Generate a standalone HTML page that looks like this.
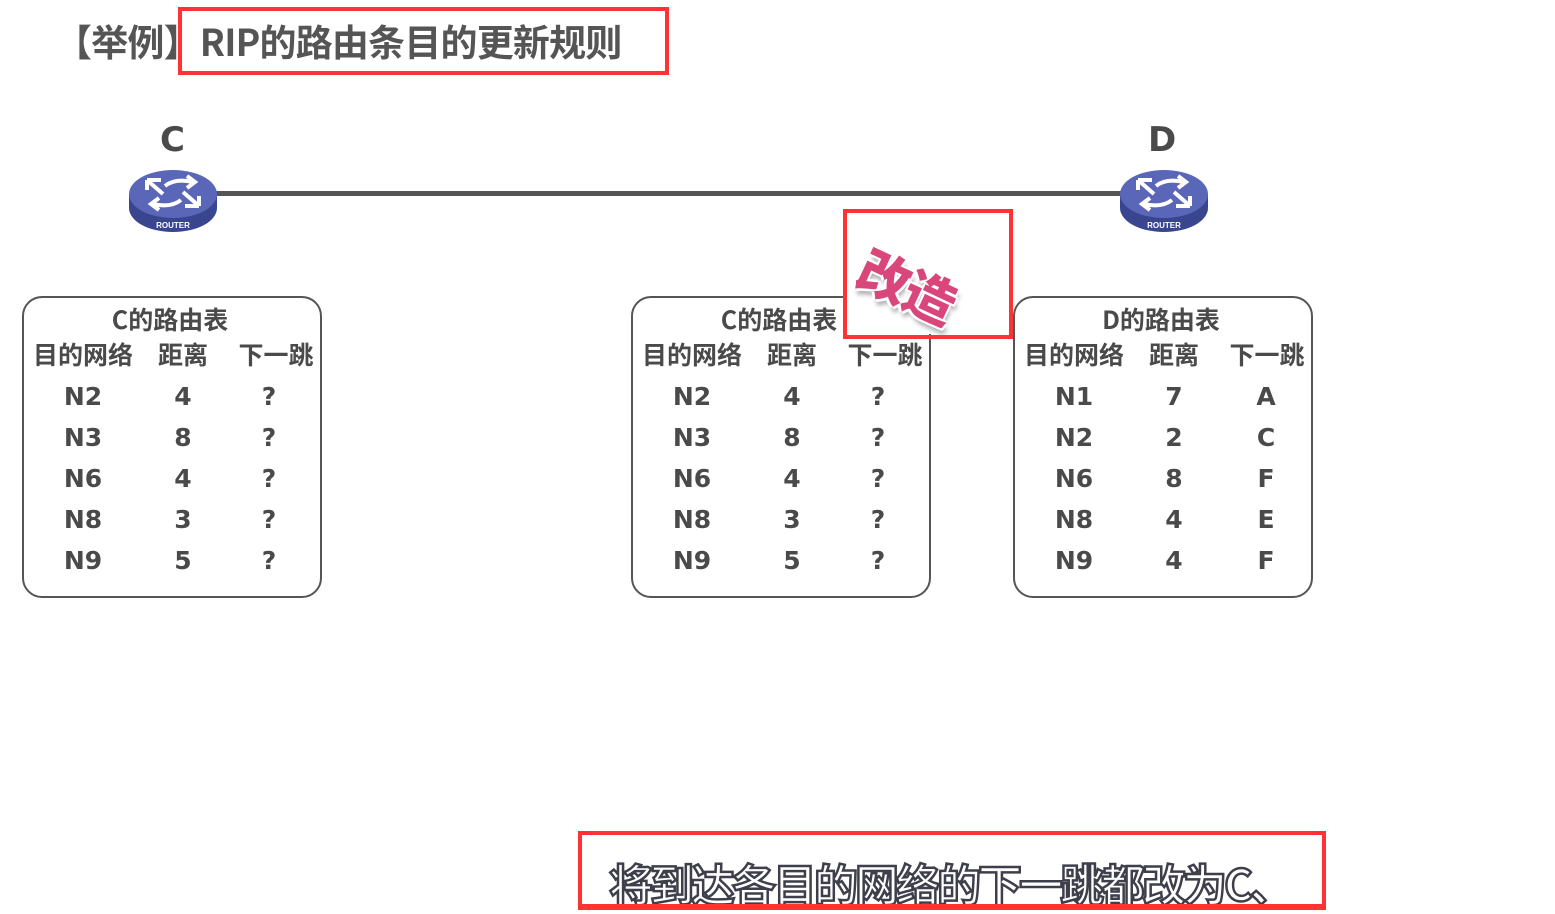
<!DOCTYPE html>
<html><head><meta charset="utf-8"><style>
body{margin:0;width:1555px;height:910px;background:#fff;position:relative;overflow:hidden;font-family:"Liberation Sans","Noto Sans CJK SC",sans-serif;color:#4a4a4a;font-weight:bold}
.a{position:absolute;white-space:nowrap}
.red{position:absolute;border:4px solid #f33;box-sizing:border-box}
.tb{position:absolute;top:296px;width:300px;height:302px;border:2px solid #555;border-radius:20px;box-sizing:border-box}
.tb div{position:absolute;transform:translateX(-50%);white-space:nowrap;font-family:"Noto Sans CJK SC",sans-serif}
.t{font-size:25px;top:3px}
.h{font-size:25px;top:38px}
.c{font-size:25px;font-family:"DejaVu Sans","Noto Sans CJK SC",sans-serif!important}
.lbl{font-size:34px;font-family:"DejaVu Sans",sans-serif}
</style></head><body>
<div class="a" style="left:55px;top:13px;font-size:37px;font-family:'Noto Sans CJK SC',sans-serif;color:#555;line-height:54px;letter-spacing:-0.8px">【举例】RIP的路由条目的更新规则</div>
<div class="red" style="left:178px;top:7px;width:491px;height:68px"></div>

<div class="a lbl" style="left:160px;top:120px">C</div>
<div class="a lbl" style="left:1148px;top:120px">D</div>
<div class="a" style="left:210px;top:191px;width:915px;height:5px;background:#555"></div>

<svg class="a" style="left:127px;top:166px" width="92" height="68" viewBox="0 0 92 68">
<ellipse cx="46" cy="42" rx="44" ry="24" fill="#3a4590"/>
<rect x="2" y="28" width="88" height="14" fill="#3a4590"/>
<ellipse cx="46" cy="28" rx="44" ry="24" fill="#5a67b8"/>
<g stroke="#fff" stroke-width="4" fill="none">
<path d="M20 14 L34 14 M20 14 L20 24 M20 14 L36 28"/>
<path d="M72 40 L58 40 M72 40 L72 30 M72 40 L56 26"/>
<path d="M38 20 Q48 12 66 16 M60 10 L68 16 L60 22"/>
<path d="M54 34 Q44 42 26 38 M32 32 L24 38 L32 44"/>
</g>
<text x="46" y="62" font-size="8" fill="#fff" text-anchor="middle" font-family="Liberation Sans" font-weight="bold">ROUTER</text>
</svg>
<svg class="a" style="left:1118px;top:166px" width="92" height="68" viewBox="0 0 92 68">
<ellipse cx="46" cy="42" rx="44" ry="24" fill="#3a4590"/>
<rect x="2" y="28" width="88" height="14" fill="#3a4590"/>
<ellipse cx="46" cy="28" rx="44" ry="24" fill="#5a67b8"/>
<g stroke="#fff" stroke-width="4" fill="none">
<path d="M20 14 L34 14 M20 14 L20 24 M20 14 L36 28"/>
<path d="M72 40 L58 40 M72 40 L72 30 M72 40 L56 26"/>
<path d="M38 20 Q48 12 66 16 M60 10 L68 16 L60 22"/>
<path d="M54 34 Q44 42 26 38 M32 32 L24 38 L32 44"/>
</g>
<text x="46" y="62" font-size="8" fill="#fff" text-anchor="middle" font-family="Liberation Sans" font-weight="bold">ROUTER</text>
</svg>

<div class="tb" style="left:22px">
<div class="t" style="left:146px">C的路由表</div>
<div class="h" style="left:59px">目的网络</div><div class="h" style="left:159px">距离</div><div class="h" style="left:252px">下一跳</div>
<div class="c" style="left:59px;top:84px">N2</div><div class="c" style="left:159px;top:84px">4</div><div class="c" style="left:245px;top:84px">?</div>
<div class="c" style="left:59px;top:125px">N3</div><div class="c" style="left:159px;top:125px">8</div><div class="c" style="left:245px;top:125px">?</div>
<div class="c" style="left:59px;top:166px">N6</div><div class="c" style="left:159px;top:166px">4</div><div class="c" style="left:245px;top:166px">?</div>
<div class="c" style="left:59px;top:207px">N8</div><div class="c" style="left:159px;top:207px">3</div><div class="c" style="left:245px;top:207px">?</div>
<div class="c" style="left:59px;top:248px">N9</div><div class="c" style="left:159px;top:248px">5</div><div class="c" style="left:245px;top:248px">?</div>
</div>

<div class="tb" style="left:631px">
<div class="t" style="left:146px">C的路由表</div>
<div class="h" style="left:59px">目的网络</div><div class="h" style="left:159px">距离</div><div class="h" style="left:252px">下一跳</div>
<div class="c" style="left:59px;top:84px">N2</div><div class="c" style="left:159px;top:84px">4</div><div class="c" style="left:245px;top:84px">?</div>
<div class="c" style="left:59px;top:125px">N3</div><div class="c" style="left:159px;top:125px">8</div><div class="c" style="left:245px;top:125px">?</div>
<div class="c" style="left:59px;top:166px">N6</div><div class="c" style="left:159px;top:166px">4</div><div class="c" style="left:245px;top:166px">?</div>
<div class="c" style="left:59px;top:207px">N8</div><div class="c" style="left:159px;top:207px">3</div><div class="c" style="left:245px;top:207px">?</div>
<div class="c" style="left:59px;top:248px">N9</div><div class="c" style="left:159px;top:248px">5</div><div class="c" style="left:245px;top:248px">?</div>
</div>

<div class="tb" style="left:1013px">
<div class="t" style="left:146px">D的路由表</div>
<div class="h" style="left:59px">目的网络</div><div class="h" style="left:159px">距离</div><div class="h" style="left:252px">下一跳</div>
<div class="c" style="left:59px;top:84px">N1</div><div class="c" style="left:159px;top:84px">7</div><div class="c" style="left:251px;top:84px">A</div>
<div class="c" style="left:59px;top:125px">N2</div><div class="c" style="left:159px;top:125px">2</div><div class="c" style="left:251px;top:125px">C</div>
<div class="c" style="left:59px;top:166px">N6</div><div class="c" style="left:159px;top:166px">8</div><div class="c" style="left:251px;top:166px">F</div>
<div class="c" style="left:59px;top:207px">N8</div><div class="c" style="left:159px;top:207px">4</div><div class="c" style="left:251px;top:207px">E</div>
<div class="c" style="left:59px;top:248px">N9</div><div class="c" style="left:159px;top:248px">4</div><div class="c" style="left:251px;top:248px">F</div>
</div>

<div class="a" style="left:847px;top:213px;width:161px;height:121px;background:#fff"></div>
<div class="a" style="left:875px;top:236px;font-size:52px;color:#d9467a;font-family:'Noto Sans CJK SC',sans-serif;font-weight:900;transform:rotate(25deg);transform-origin:left top;text-shadow:2px 2px 0 #fff,-2px -2px 0 #fff,2px -2px 0 #fff,-2px 2px 0 #fff,4px 5px 4px rgba(0,0,0,.3);letter-spacing:-2px;line-height:60px">改造</div>
<div class="red" style="left:843px;top:209px;width:170px;height:130px"></div>

<div class="a" style="left:609px;top:852px;font-size:44px;font-family:'Noto Sans CJK SC',sans-serif;font-weight:bold;color:#fff;-webkit-text-stroke:2.5px #3f3f4c;letter-spacing:-3px;line-height:60px">将到达各目的网络的下一跳都改为C、</div>
<div class="a" style="left:578px;top:831px;width:748px;height:79px;border:4px solid #f33;border-bottom:none;box-sizing:border-box"></div>
<div class="a" style="left:578px;top:904px;width:748px;height:6px;background:#f33"></div>
</body></html>
